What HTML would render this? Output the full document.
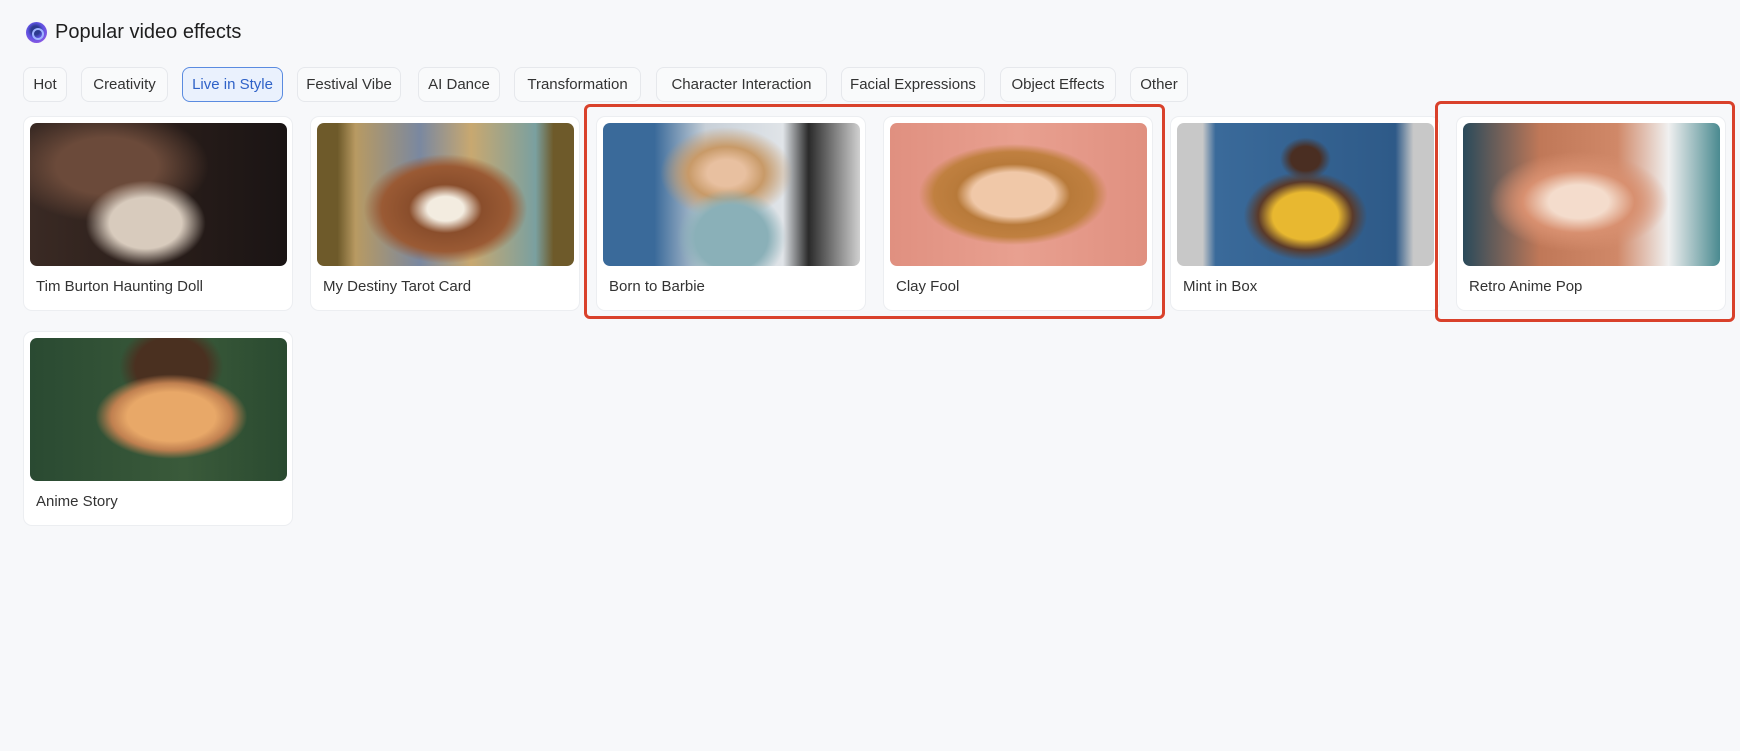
<!DOCTYPE html>
<html><head><meta charset="utf-8"><style>
*{box-sizing:border-box;margin:0;padding:0}
body{width:1740px;height:751px;background:#f7f8fa;font-family:"Liberation Sans",sans-serif;position:relative;overflow:hidden;color:#333}
.title{position:absolute;left:55px;top:20px;font-size:20px;color:#1e1e1e;line-height:24px}
.ico{position:absolute;left:26px;top:22px;width:21px;height:21px;border-radius:50%;background:radial-gradient(circle at 45% 40%,#2c3a8f 0 25%,#5c52e0 45%,#b260e8 100%)}
.ico:after{content:"";position:absolute;left:6px;top:6px;width:8px;height:8px;border-radius:50%;border:2px solid #9fb3ff}
.tab{position:absolute;top:67px;height:35px;line-height:33px;border:1px solid #e6e8ec;border-radius:8px;background:#f9fafb;font-size:15px;color:#333;text-align:center}
.tab.on{background:#eaf1fd;border-color:#5a8be0;color:#2f62c8}
.card{position:absolute;width:270px;height:195px;background:#fff;border:1px solid #eceef1;border-radius:9px}
.card .img{position:absolute;left:6px;top:6px;width:257px;height:143px;border-radius:7px}
.card .lb{position:absolute;left:12px;top:161px;font-size:15px;color:#333}
.red{position:absolute;border:3px solid #d9412b;border-radius:6px}
</style></head><body>
<div class="ico"></div>
<div class="title">Popular video effects</div>
<div class="tab" style="left:23px;width:44px">Hot</div>
<div class="tab" style="left:81px;width:87px">Creativity</div>
<div class="tab on" style="left:182px;width:101px">Live in Style</div>
<div class="tab" style="left:297px;width:104px">Festival Vibe</div>
<div class="tab" style="left:418px;width:82px">AI Dance</div>
<div class="tab" style="left:514px;width:127px">Transformation</div>
<div class="tab" style="left:656px;width:171px">Character Interaction</div>
<div class="tab" style="left:841px;width:144px">Facial Expressions</div>
<div class="tab" style="left:1000px;width:116px">Object Effects</div>
<div class="tab" style="left:1130px;width:58px">Other</div>

<div class="card" style="left:23px;top:116px"><div class="img" style="background:radial-gradient(ellipse at 45% 70%,#d8cbbd 0 18%,transparent 30%),radial-gradient(ellipse at 30% 30%,#6b4a3a 0 20%,transparent 40%),linear-gradient(90deg,#3a2a24,#2a1e1a 50%,#1a1414)"></div><div class="lb">Tim Burton Haunting Doll</div></div>
<div class="card" style="left:310px;top:116px"><div class="img" style="background:radial-gradient(ellipse at 50% 60%,#f3ece0 0 10%,#8a4e2c 20%,#9a5a34 35%,transparent 45%),linear-gradient(90deg,#6e5a2a 0 8%,#b89a62 15%,#7a88a0 40%,#c8a870 60%,#7aa0a0 85%,#6e5a2a 92%)"></div><div class="lb">My Destiny Tarot Card</div></div>
<div class="card" style="left:596px;top:116px"><div class="img" style="background:radial-gradient(ellipse at 50% 80%,#8ab0b8 0 20%,transparent 30%),radial-gradient(ellipse at 48% 35%,#e8c0a0 0 10%,#c89a68 20%,transparent 35%),linear-gradient(90deg,#3a6a9a 0 20%,#c8d0d8 40%,#e0e4e8 70%,#2a2a2a 80%,#d0d0d0)"></div><div class="lb">Born to Barbie</div></div>
<div class="card" style="left:883px;top:116px"><div class="img" style="background:radial-gradient(ellipse at 48% 50%,#f0c8a8 0 22%,#b87a3a 30%,#c08040 42%,transparent 50%),linear-gradient(90deg,#e09080,#e8a090 50%,#e09080)"></div><div class="lb">Clay Fool</div></div>
<div class="card" style="left:1170px;top:116px"><div class="img" style="background:radial-gradient(ellipse at 50% 65%,#e8b830 0 18%,#5a3a2a 26%,transparent 34%),radial-gradient(ellipse at 50% 25%,#4a2e22 0 8%,transparent 14%),linear-gradient(90deg,#c8c8c8 0 10%,#3a6a9a 15%,#2e5a88 85%,#c8c8c8 92%)"></div><div class="lb">Mint in Box</div></div>
<div class="card" style="left:1456px;top:116px"><div class="img" style="background:radial-gradient(ellipse at 45% 55%,#f4dccc 0 15%,#d89070 28%,transparent 45%),linear-gradient(90deg,#2a4a5a,#c07858 30%,#d08868 60%,#f0f0f0 80%,#4a8a90)"></div><div class="lb">Retro Anime Pop</div></div>
<div class="card" style="left:23px;top:331px"><div class="img" style="background:radial-gradient(ellipse at 55% 55%,#e8a868 0 22%,#c08050 30%,transparent 38%),radial-gradient(ellipse at 55% 20%,#4a3020 0 18%,transparent 26%),linear-gradient(90deg,#2a4a32,#3a5a3a 60%,#2a4a30)"></div><div class="lb">Anime Story</div></div>

<div class="red" style="left:584px;top:104px;width:581px;height:215px"></div>
<div class="red" style="left:1435px;top:101px;width:300px;height:221px"></div>
</body></html>
